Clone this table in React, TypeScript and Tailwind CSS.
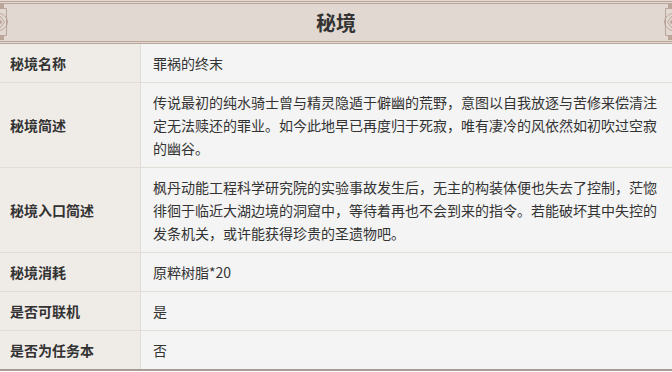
const ROWS: { label: string; value: string }[] = [
  { label: "秘境名称", value: "罪祸的终末" },
  {
    label: "秘境简述",
    value:
      "传说最初的纯水骑士曾与精灵隐遁于僻幽的荒野，意图以自我放逐与苦修来偿清注定无法赎还的罪业。如今此地早已再度归于死寂，唯有凄冷的风依然如初吹过空寂的幽谷。",
  },
  {
    label: "秘境入口简述",
    value:
      "枫丹动能工程科学研究院的实验事故发生后，无主的构装体便也失去了控制，茫惚徘徊于临近大湖边境的洞窟中，等待着再也不会到来的指令。若能破坏其中失控的发条机关，或许能获得珍贵的圣遗物吧。",
  },
  { label: "秘境消耗", value: "原粹树脂*20" },
  { label: "是否可联机", value: "是" },
  { label: "是否为任务本", value: "否" },
];

function Ornament({ flip }: { flip?: boolean }) {
  return (
    <svg
      width="12"
      height="44"
      viewBox="0 0 12 44"
      className={flip ? "absolute right-0 top-0 -scale-x-100" : "absolute left-0 top-0"}
      fill="none"
      stroke="#bba59b"
    >
      {/* corner brackets */}
      <rect x="0" y="4" width="4" height="4" fill="#bba59b" stroke="none" />
      <rect x="0" y="36" width="4" height="4" fill="#bba59b" stroke="none" />
      <path d="M0 8.5H6.5V35.5H0" strokeWidth="1" />
      {/* medallion */}
      <path d="M0 13.5C5 15 7.5 18.5 7.5 22C7.5 25.5 5 29 0 30.5" strokeWidth="1" />
      <path d="M0 16L4.5 22L0 28" strokeWidth="1" />
      <circle cx="0" cy="22" r="2" fill="#bba59b" stroke="none" />
    </svg>
  );
}

export default function App() {
  return (
    <div
      className="w-[672px] bg-[#f4f4f4] text-[14px] text-[#333]"
      style={{ fontFamily: '"Noto Sans CJK SC", "Noto Sans", sans-serif' }}
    >
      {/* Header */}
      <div className="relative h-[44px] bg-[#e1d9d1] pt-[1px]">
        <div className="flex h-[43px] items-center justify-center border-y-[3px] border-double border-[#bca69c]">
          <h3 className="text-[20px] font-bold leading-none text-[#333]">秘境</h3>
        </div>
        <Ornament />
        <Ornament flip />
      </div>

      {/* Rows */}
      <div className="border-b-2 border-[#a99c94]">
        {ROWS.map((row, i) => (
          <div
            key={row.label}
            className={
              i === ROWS.length - 1
                ? "grid grid-cols-[141px_1fr]"
                : "grid grid-cols-[141px_1fr] border-b border-[#e2ddd6]"
            }
          >
            <div className="flex items-center border-r border-[#e2ddd6] bg-[#efebe7] px-[10px] font-bold">
              {row.label}
            </div>
            <div className="px-3 pb-[7px] pt-2 leading-[23px]">{row.value}</div>
          </div>
        ))}
      </div>
    </div>
  );
}
